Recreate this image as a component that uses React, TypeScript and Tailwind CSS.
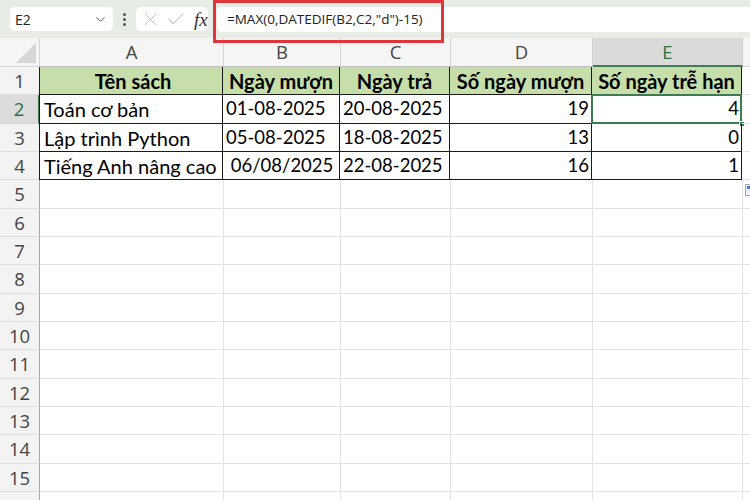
import React from 'react'
import { ChevronDown, X, Check } from 'lucide-react'

const cols = [
  { key: 'A', w: 'w-[184px]' },
  { key: 'B', w: 'w-[117px]' },
  { key: 'C', w: 'w-[110px]' },
  { key: 'D', w: 'w-[142px]' },
  { key: 'E', w: 'w-[150px]' },
]

const rowH = ['h-[28px]', 'h-[29px]', 'h-[28px]', 'h-[28px]', 'h-[29px]', 'h-[28px]', 'h-[28px]', 'h-[29px]', 'h-[28px]', 'h-[28px]', 'h-[29px]', 'h-[28px]', 'h-[28px]', 'h-[29px]', 'h-[28px]', 'h-[28px]']

type Cell = { v: string; align: 'l' | 'r' | 'c'; bold?: boolean; num?: boolean }

const data: Cell[][] = [
  [
    { v: 'Tên sách', align: 'c', bold: true },
    { v: 'Ngày mượn', align: 'c', bold: true },
    { v: 'Ngày trả', align: 'c', bold: true },
    { v: 'Số ngày mượn', align: 'c', bold: true },
    { v: 'Số ngày trễ hạn', align: 'c', bold: true },
  ],
  [
    { v: 'Toán cơ bản', align: 'l' },
    { v: '01-08-2025', align: 'l', num: true },
    { v: '20-08-2025', align: 'l', num: true },
    { v: '19', align: 'r', num: true },
    { v: '4', align: 'r', num: true },
  ],
  [
    { v: 'Lập trình Python', align: 'l' },
    { v: '05-08-2025', align: 'l', num: true },
    { v: '18-08-2025', align: 'l', num: true },
    { v: '13', align: 'r', num: true },
    { v: '0', align: 'r', num: true },
  ],
  [
    { v: 'Tiếng Anh nâng cao', align: 'l' },
    { v: ' 06/08/2025', align: 'l', num: true },
    { v: '22-08-2025', align: 'l', num: true },
    { v: '16', align: 'r', num: true },
    { v: '1', align: 'r', num: true },
  ],
]

function TopBar() {
  return (
    <div className="relative h-[38px] bg-[#e7ece5] flex items-start pt-[7px] pl-[10px]">
      <div className="w-[103px] h-[24px] bg-white rounded-[5px] flex items-center justify-between pl-[5px] pr-[5px] text-[14px] text-[#222] font-['Open_Sans',sans-serif]">
        <span>E2</span>
        <ChevronDown size={15} strokeWidth={1.5} className="text-[#555]" />
      </div>
      <div className="w-[23px] h-[24px] flex flex-col items-center justify-center gap-[2px]">
        <span className="w-[3px] h-[3px] bg-[#555] rounded-full" />
        <span className="w-[3px] h-[3px] bg-[#555] rounded-full" />
        <span className="w-[3px] h-[3px] bg-[#555] rounded-full" />
      </div>
      <div className="w-[72px] h-[24px] bg-white rounded-[5px] flex items-center pl-[4px] gap-[4px]">
        <X size={21} strokeWidth={1.1} className="text-[#c4c4c4]" />
        <Check size={22} strokeWidth={1.1} className="text-[#c4c4c4]" />
        <span className="ml-[3px] text-[19px] italic font-['Liberation_Serif',serif] text-[#333] leading-none">fx</span>
      </div>
      <div className="ml-[9px] flex-1 h-[25px] bg-white rounded-l-[5px] flex items-center pl-[10px] text-[13.5px] text-[#222] font-['Open_Sans',sans-serif]">
        =MAX(0,DATEDIF(B2,C2,"d")-15)
      </div>
      <div className="absolute left-[213px] top-0 w-[231px] h-[43px] border-[3px] border-[#e0363b]" />
    </div>
  )
}

function App() {
  return (
    <div className="w-[750px] h-[500px] overflow-hidden bg-white font-['Lato',sans-serif]">
      <TopBar />
      <div className="flex h-[29px] bg-[#f5f5f5] text-[18.5px] text-[#444] font-['Open_Sans',sans-serif]">
        <div className="w-[40px] shrink-0 border-r border-b border-[#d4d4d4] relative">
          <svg width="40" height="29" className="absolute inset-0">
            <polygon points="16,25 36,25 36,5" fill="#d6d6d6" />
          </svg>
        </div>
        {cols.map((c) => (
          <div
            key={c.key}
            className={
              c.key === 'E'
                ? `${c.w} shrink-0 flex items-center justify-center bg-[#dadada] text-[#2f6f44] border-r border-[#cfcfcf] border-b-2 border-b-[#3e7b53]`
                : `${c.w} shrink-0 flex items-center justify-center border-r border-b border-[#d4d4d4] border-b-[#bdbdbd]`
            }
          >
            {c.key}
          </div>
        ))}
        <div className="flex-1 border-b border-[#d4d4d4]" />
      </div>
      {rowH.map((h, ri) => {
        const row = data[ri]
        return (
          <div key={ri} className={`flex shrink-0 ${h}`}>
            <div
              className={
                ri === 1
                  ? 'w-[40px] shrink-0 flex items-center justify-center bg-[#dcdcdc] text-[#2f6f44] border-r-2 border-r-[#3e7b53] border-b border-b-[#d4d4d4] text-[18.5px] font-[\'Open_Sans\',sans-serif]'
                  : 'w-[40px] shrink-0 flex items-center justify-center bg-[#f3f3f3] text-[#444] border-r border-r-[#a8a8a8] border-b border-b-[#dedede] text-[18.5px] font-[\'Open_Sans\',sans-serif]'
              }
            >
              {ri < 15 ? ri + 1 : null}
            </div>
            {cols.map((c, ci) => {
              const cell = row ? row[ci] : null
              const sel = ri === 1 && ci === 4
              let cls = `${c.w} shrink-0 relative flex items-center text-black whitespace-pre overflow-visible `
              if (row) {
                cls += 'border-r border-b border-[#1a1a1a] '
                if (ci === 0) cls += 'border-l border-l-[#1a1a1a] -ml-[1px] pl-[4px] '
                if (ri === 0) cls += 'bg-[#c6dea9] '
              } else {
                cls += 'border-r border-b border-[#e2e2e2] '
              }
              if (cell) {
                cls += cell.align === 'c' ? 'justify-center ' : cell.align === 'r' ? 'justify-end pr-[2px] ' : 'pl-[3px] '
                cls += cell.num ? 'text-[18.5px] ' : 'text-[20px] '
                if (cell.bold) cls += 'font-bold '
              }
              return (
                <div key={c.key} className={cls}>
                  {cell ? cell.v : null}
                  {sel && (
                    <>
                      <div className="absolute -left-[1px] -top-[1px] -right-[1px] -bottom-[1px] border-2 border-[#3e7b53] pointer-events-none" />
                      <div className="absolute -right-[4px] -bottom-[4px] w-[6px] h-[6px] bg-[#3e7b53] border border-white" />
                    </>
                  )}
                </div>
              )
            })}
            <div className="flex-1 border-b border-[#e2e2e2] relative">
              {ri === 4 && (
                <div className="absolute left-[2px] top-[4px] w-[10px] h-[12px] border border-[#9aa8c0] bg-[#eef2f8]">
                  <div className="w-[5px] h-[3px] bg-[#4a78c0] mt-[1px] ml-[1px]" />
                </div>
              )}
            </div>
          </div>
        )
      })}
    </div>
  )
}

export default App
